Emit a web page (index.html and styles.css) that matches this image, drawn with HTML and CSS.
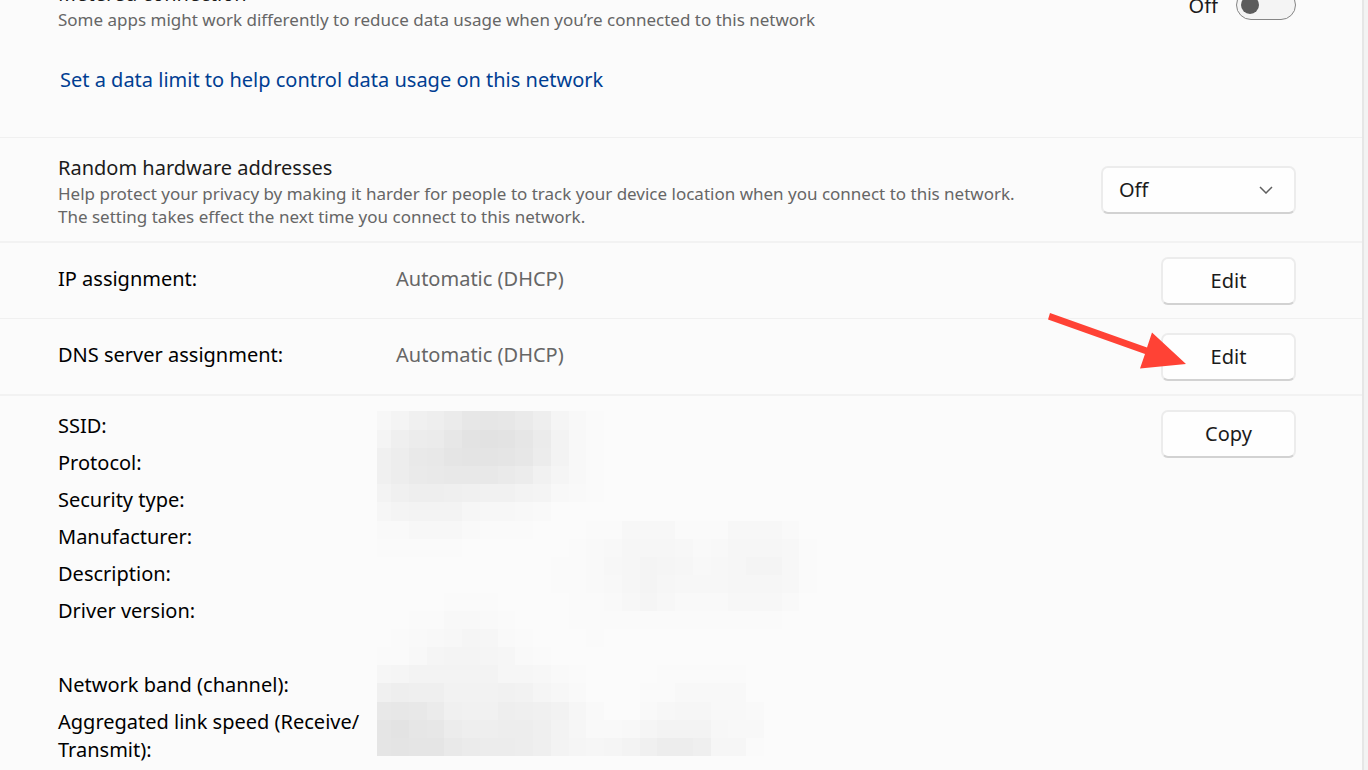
FILE: index.html
```html
<!DOCTYPE html>
<html lang="en">
<head>
  <meta charset="UTF-8">
  <title>Wi-Fi properties</title>
  <link rel="stylesheet" href="styles.css">
</head>
<body>
  <main class="panel">
    <section class="metered">
      <div class="row">
        <div class="text">
          <label class="title" for="metered">Metered connection</label>
          <p class="caption">Some apps might work differently to reduce data usage when you’re connected to this network</p>
        </div>
        <div class="toggle">
          <span>Off</span>
          <input type="checkbox" role="switch" id="metered" class="switch">
        </div>
      </div>
      <a class="link" href="#limit">Set a data limit to help control data usage on this network</a>
    </section>

    <section class="row random">
      <div class="text">
        <label class="title" for="random">Random hardware addresses</label>
        <p class="caption">Help protect your privacy by making it harder for people to track your device location when you connect to this network.<br>The setting takes effect the next time you connect to this network.</p>
      </div>
      <div class="select">
        <select id="random">
          <option>Off</option>
          <option>On</option>
          <option>Change daily</option>
        </select>
        <svg class="chevron" viewBox="0 0 14 8"><path d="M1 1l6 6 6-6"/></svg>
      </div>
    </section>

    <section class="row setting thick">
      <span class="name">IP assignment:</span>
      <span class="value">Automatic (DHCP)</span>
      <button class="btn">Edit</button>
    </section>

    <section class="row setting">
      <span class="name">DNS server assignment:</span>
      <span class="value">Automatic (DHCP)</span>
      <div class="pointed">
        <button class="btn">Edit</button>
        <svg class="arrow" viewBox="0 0 140 58"><path d="M3 1L100 35.500l5-15L139 52l-46 4.500L98 42 1 7.500z"/></svg>
      </div>
    </section>

    <section class="row details thick">
      <ul class="names">
        <li>SSID:</li>
        <li>Protocol:</li>
        <li>Security type:</li>
        <li>Manufacturer:</li>
        <li>Description:</li>
        <li>Driver version:</li>
        <li class="blank"></li>
        <li>Network band (channel):</li>
        <li>Aggregated link speed (Receive/<br>Transmit):</li>
      </ul>
      <svg class="mosaic" id="mosaic" viewBox="0 0 440 345" shape-rendering="crispEdges"></svg>
      <button class="btn">Copy</button>
    </section>
  </main>
  <script src="mosaic.js"></script>
</body>
</html>
```
FILE: styles.css
```css
* { box-sizing: border-box; }
body { font-family: "Segoe UI", "Noto Sans", sans-serif; font-size: 20px; line-height: 28px; color: #1b1b1b; background: #f3f3f3; margin: 0; padding-right: 4px; overflow: hidden; }
p, ul { margin: 0; padding: 0; list-style: none; }
.panel { background: #fbfbfb; border-right: 2px solid #e6e6e6; margin-top: -36px; min-height: calc(100vh + 36px); }
section { padding: 14px 66px 13px 58px; border-top: 1px solid #f0f0f0; }
section.thick { border-top: 2px solid #f2f2f2; }
.row { display: flex; align-items: center; justify-content: space-between; }
.title { display: block; }
.caption { font-size: 17px; line-height: 23px; color: #666; }

.metered { border-top: none; padding-top: 16px; padding-bottom: 43px; }
.toggle { display: flex; align-items: center; gap: 18px; }
.switch { appearance: none; width: 60px; height: 30px; margin: 0 0 2px; padding: 5px 4px; border: 1px solid #858585; border-radius: 15px; background: #f4f4f4; }
.switch::before { content: ""; display: block; width: 18px; height: 18px; border-radius: 50%; background: #5c5c5c; }
.switch:checked { background: #0067c0; }
.link { display: block; width: fit-content; margin: 35px 2px 0; color: #003e92; text-decoration: none; }

.random { align-items: flex-start; padding-top: 16px; }
.select { position: relative; margin-top: 12px; }
.select select { appearance: none; display: block; width: 195px; padding: 0 16px; }
.select select, .btn { font: inherit; color: #1b1b1b; height: 48px; background: #fefefe; border: 2px solid #ececec; border-bottom-color: #d2d2d2; border-radius: 7px; }
.chevron { position: absolute; right: 23px; top: 20px; width: 14px; height: 8px; fill: none; stroke: #5f5f5f; stroke-width: 1.500; }

.btn { width: 135px; padding: 0; }
.name { flex: 0 0 338px; color: #000; padding-bottom: 4px; }
.value { flex: 1; color: #666; padding-bottom: 4px; }
.pointed { position: relative; display: flex; }
.arrow { position: absolute; left: -114px; top: -21px; width: 140px; height: 58px; fill: #ff4235; pointer-events: none; }

.details { align-items: flex-start; padding-bottom: 4px; }
.names { flex: 0 0 319px; display: flex; flex-direction: column; gap: 9px; padding-top: 2px; color: #000; }
.blank { height: 28px; }
.mosaic { width: 440px; height: 345px; margin: 1px auto 0 0; }
```
FILE: mosaic.js
```javascript
// darkness of each blurred cell, one base 36 digit per cell
const rows = [
  '47bdgklkhd631000000000000',
  '7cfgkopolg831000000000000',
  'beijmnnmkf831000000000000',
  'behijjjhfa631000000000000',
  '8bddcbaa87321000000000000',
  '5788854432000000000000000',
  '2244421110001144411144420',
  '1111100000012355542355541',
  '0000000000112457653457741',
  '0000000000112357544455541',
  '0000111000011246422244420',
  '0011332100011111111111100',
  '0123465210001000000000000',
  '1136776521000000000000000',
  '5688888554210000111110000',
  'bdcc999a96420001133330000',
  'jkjgbaadcb952002455332000',
  'molkfddeec852236888433000',
  'mnmmigffec86568beec551000'
];
const edge = (i, first, step) => i ? Math.round(first + (i - 1) * step) : 0;

const svg = document.getElementById('mosaic');
rows.forEach((row, y) => {
  [...row].forEach((cell, x) => {
    const shade = 251 - parseInt(cell, 36);
    const left = edge(x, 14, 17.75);
    const top = edge(y, 19, 18.1);
    const rect = document.createElementNS('http://www.w3.org/2000/svg', 'rect');
    rect.setAttribute('x', left);
    rect.setAttribute('y', top);
    rect.setAttribute('width', edge(x + 1, 14, 17.75) - left);
    rect.setAttribute('height', edge(y + 1, 19, 18.1) - top);
    rect.setAttribute('fill', `rgb(${shade}, ${shade}, ${shade})`);
    svg.appendChild(rect);
  });
});
```
